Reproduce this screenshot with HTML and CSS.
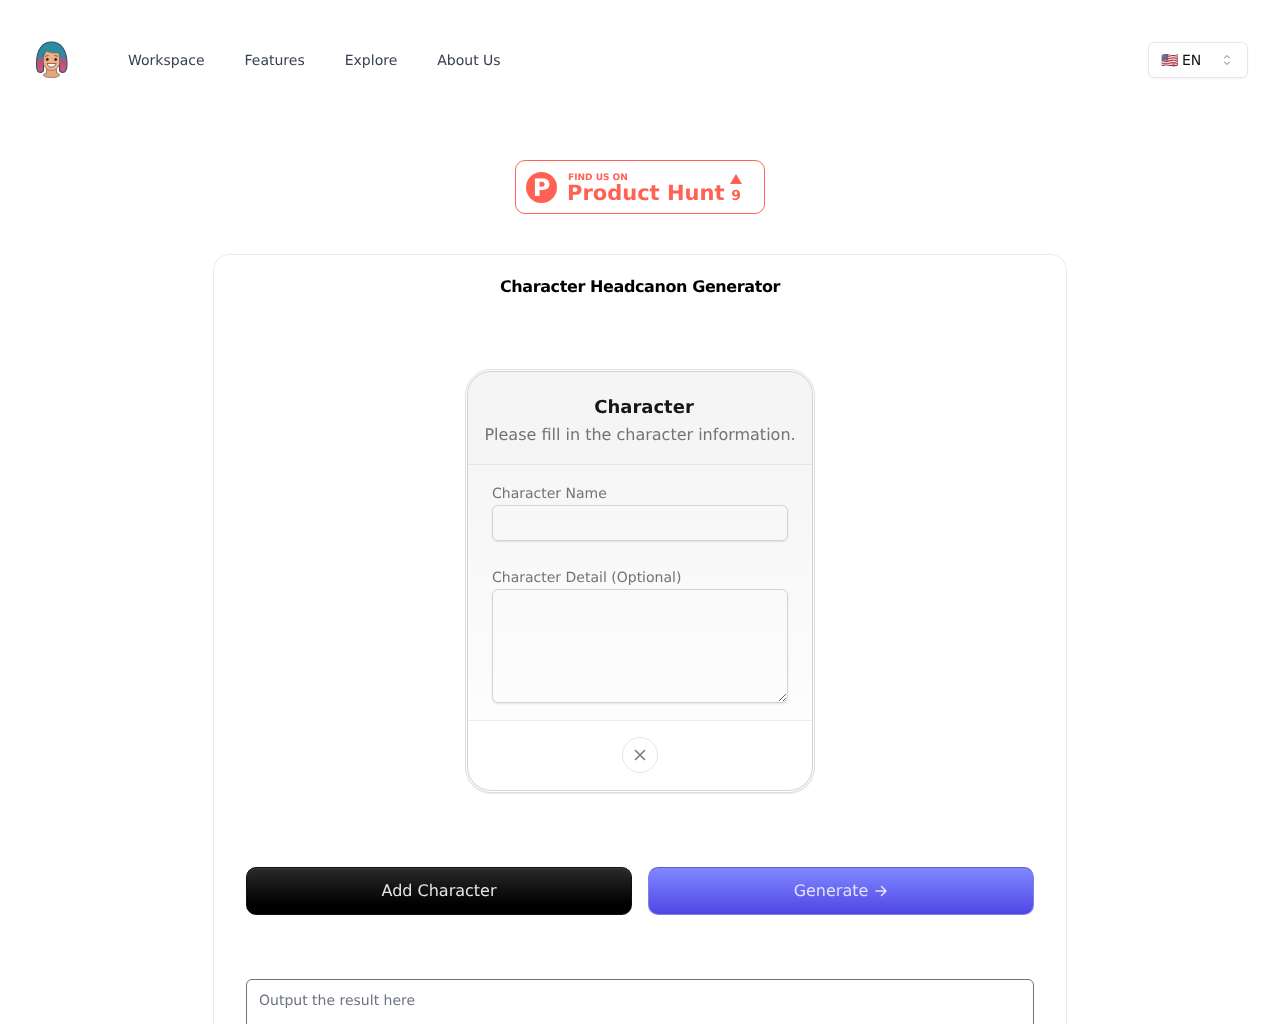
FILE: index.html
```html
<!DOCTYPE html>
<html lang="en">
<head>
<meta charset="utf-8">
<title>Character Headcanon Generator</title>
<link rel="stylesheet" href="styles.css">
</head>
<body>
<header class="topbar">
  <div class="brand">
    <a class="logo" href="#" aria-label="Home">
      <svg width="36" height="40" viewBox="0 0 36 40">
        <defs>
          <linearGradient id="hair" x1="0" y1="0" x2="0" y2="1">
            <stop offset="0" stop-color="#2b8c9f"/>
            <stop offset=".45" stop-color="#2f8ba3"/>
            <stop offset=".62" stop-color="#b3527f"/>
            <stop offset="1" stop-color="#d9557a"/>
          </linearGradient>
        </defs>
        <path d="M12.500 27h10v6c2 .3 3 1 3 2 0 1.500-2.500 2.500-8 2.500S9.500 36.500 9.500 35c0-1 1-1.700 3-2z" fill="#e3a57c" stroke="#8a5f48" stroke-width=".7"/>
        <path d="M2.500 24C2.500 10 8 2 17.500 2S33 10 33 24c0 4-1 7-2.500 8-2 .8-4.500.3-5-1.500V14H9.500v16.500c-.5 1.800-3 2.300-5 1.500C3.200 31 2.500 28 2.500 24z" fill="url(#hair)" stroke="#30506e" stroke-width="1.100"/>
        <path d="M9.500 19c0-4 1.500-6.500 3.500-7.500 3 1.300 8 1.800 12 1.500.5 2 .5 4 .5 6v3.500c0 4.500-3.500 8-8 8s-8-3.500-8-8z" fill="#f0b088" stroke="#8a5f48" stroke-width=".6"/>
        <circle cx="13.300" cy="19.500" r="1.400" fill="#35261f"/>
        <circle cx="21.700" cy="19.500" r="1.400" fill="#35261f"/>
        <path d="M11 16.300l3.500-.8M20.500 15.500l3.500.8" stroke="#6b3f2a" stroke-width=".8"/>
        <path d="M13 23.500h9c-.7 2.400-2.300 3.500-4.500 3.500S13.700 25.900 13 23.500z" fill="#fff" stroke="#6b3f2a" stroke-width=".7"/>
      </svg>
    </a>
    <nav class="nav">
      <a href="#">Workspace</a>
      <a href="#">Features</a>
      <a href="#">Explore</a>
      <a href="#">About Us</a>
    </nav>
  </div>
  <button class="lang" type="button">
    <span class="lang-label">🇺🇸 EN</span>
    <svg width="10" height="14" viewBox="0 0 10 14" fill="none" stroke="#777" stroke-width="1" stroke-linecap="round" stroke-linejoin="round">
      <path d="M2.500 5L5 2.500 7.500 5M2.500 9L5 11.500 7.500 9"/>
    </svg>
  </button>
</header>

<main class="page">
  <a class="ph-badge" href="#">
    <span class="ph-mark">P</span>
    <span class="ph-text">
      <span class="ph-find">FIND US ON</span>
      <span class="ph-name">Product Hunt</span>
    </span>
    <span class="ph-votes">
      <span class="ph-arrow"></span>
      <span class="ph-count">9</span>
    </span>
  </a>

  <section class="panel">
    <h1 class="panel-title">Character Headcanon Generator</h1>

    <div class="char-card">
      <div class="char-head">
        <h2 class="char-title">Character</h2>
        <p class="char-sub">Please fill in the character information.</p>
      </div>
      <div class="char-body">
        <label class="field">
          <span class="field-label">Character Name</span>
          <input class="input" type="text">
        </label>
        <label class="field">
          <span class="field-label">Character Detail (Optional)</span>
          <textarea class="input area"></textarea>
        </label>
      </div>
      <div class="char-foot">
        <button class="close" type="button" aria-label="Remove">
          <svg width="12" height="12" viewBox="0 0 12 12" fill="none" stroke="#777" stroke-width="1.500" stroke-linecap="round">
            <path d="M1.500 1.500l9 9M10.500 1.500l-9 9"/>
          </svg>
        </button>
      </div>
    </div>

    <div class="actions">
      <button class="btn btn-dark" type="button">Add Character</button>
      <button class="btn btn-blue" type="button">Generate
        <svg width="14" height="14" viewBox="0 0 14 14" fill="none" stroke="currentColor" stroke-width="1.600" stroke-linecap="round" stroke-linejoin="round">
          <path d="M2 7h10M7.500 2.500L12 7l-4.500 4.500"/>
        </svg>
      </button>
    </div>

    <textarea class="output" placeholder="Output the result here"></textarea>
  </section>
</main>
</body>
</html>
```

FILE: styles.css
```css
* { box-sizing: border-box; }
html, body { margin: 0; height: 1024px; overflow: hidden; background: #fff; }
body { font-family: "DejaVu Sans", sans-serif; color: #111; text-rendering: geometricPrecision; }

.topbar {
  display: flex;
  align-items: center;
  justify-content: space-between;
  height: 120px;
  padding: 0 32px 0 34px;
  will-change: transform;
}
.brand { display: flex; align-items: center; gap: 58px; }
.logo { display: block; width: 36px; height: 40px; }
.nav { display: flex; gap: 40px; padding-top: 2px; }
.nav a { font-size: 14px; line-height: 20px; color: #374151; text-decoration: none; }
.lang {
  display: flex;
  align-items: center;
  justify-content: space-between;
  width: 100px;
  height: 36px;
  padding: 0 15px 0 12px;
  background: #fff;
  border: 1px solid #e5e7eb;
  border-radius: 6px;
  box-shadow: 0 1px 2px rgba(0,0,0,.05);
  font: 14px/20px "DejaVu Sans", sans-serif;
  color: #111;
  text-rendering: geometricPrecision;
}
.lang-label { white-space: nowrap; word-spacing: -1px; padding-top: 2px; }

.page { display: flex; flex-direction: column; align-items: center; padding-top: 40px; will-change: transform; }

.ph-badge {
  display: flex;
  align-items: center;
  width: 250px;
  height: 54px;
  padding: 0 22px 0 10px;
  border: 1px solid #ff6154;
  border-radius: 10px;
  background: #fff;
  color: #ff6154;
  text-decoration: none;
}
.ph-mark {
  flex: none;
  width: 31px;
  height: 31px;
  border-radius: 50%;
  background: #ff6154;
  color: #fff;
  font-size: 24px;
  font-weight: 700;
  line-height: 32px;
  text-align: center;
}
.ph-text { display: flex; flex-direction: column; margin-left: 10px; padding-top: 3px; }
.ph-find { font-size: 9px; font-weight: 700; line-height: 10px; margin-left: 1px; margin-bottom: -1px; }
.ph-name { font-size: 21px; font-weight: 700; line-height: 23px; white-space: nowrap; }
.ph-votes { display: flex; flex-direction: column; align-items: center; gap: 5px; margin-left: auto; margin-top: 2px; }
.ph-arrow {
  width: 0; height: 0;
  border-left: 6px solid transparent;
  border-right: 6px solid transparent;
  border-bottom: 10px solid #ff6154;
}
.ph-count { font-size: 14px; font-weight: 700; line-height: 14px; }

.panel {
  width: 854px;
  height: 900px;
  margin-top: 40px;
  padding: 22px 32px 0;
  border: 1px solid #e9eaed;
  border-radius: 16px;
  background: #fff;
}
.panel-title { margin: 0; font-size: 16px; letter-spacing: -.4px; line-height: 20px; font-weight: 700; text-align: center; color: #000; }

.char-card {
  width: 350px;
  height: 424px;
  margin: 72px auto 0;
  border: 1px solid #e0e0e0;
  border-radius: 26px;
  padding: 1px;
  box-shadow: 0 1px 0 #e8e8e8;
}
.char-head {
  height: 94px;
  padding-top: 23px;
  border: 1px solid #d4d4d4;
  border-bottom: 1px solid #e5e5e5;
  border-radius: 24px 24px 0 0;
  background: #f5f5f5;
  text-align: center;
}
.char-title { margin: 0 0 0 8px; font-size: 18px; line-height: 26px; font-weight: 700; color: #171717; }
.char-sub { margin: 2px 0 0; font-size: 16px; line-height: 24px; color: #737373; white-space: nowrap; }
.char-body {
  display: flex;
  flex-direction: column;
  gap: 28px;
  height: 256px;
  padding: 20px 24px 0;
  border-left: 1px solid #d4d4d4;
  border-right: 1px solid #d4d4d4;
  border-bottom: 1px solid #ebebeb;
  background: linear-gradient(#f6f6f6, #fdfdfd);
}
.field { display: flex; flex-direction: column; }
.field-label { font-size: 14px; line-height: 18px; color: #737373; margin-bottom: 2px; }
.input {
  display: block;
  width: 100%;
  height: 36px;
  margin: 0;
  border: 1px solid #d4d4d4;
  border-radius: 6px;
  background: transparent;
  box-shadow: 0 1px 2px rgba(0,0,0,.1);
  font: 14px/20px "DejaVu Sans", sans-serif;
}
.area { height: 114px; resize: vertical; }
.char-foot {
  display: flex;
  justify-content: center;
  align-items: center;
  height: 70px;
  padding-bottom: 2px;
  border: 1px solid #d4d4d4;
  border-top: 0;
  border-radius: 0 0 24px 24px;
  background: #fff;
}
.close {
  display: flex;
  align-items: center;
  justify-content: center;
  width: 36px;
  height: 36px;
  padding: 0;
  border: 1px solid #e5e5e5;
  border-radius: 50%;
  background: #fff;
}

.actions { display: grid; grid-template-columns: 1fr 1fr; gap: 16px; margin-top: 74px; }
.btn {
  display: flex;
  align-items: center;
  justify-content: center;
  gap: 6px;
  height: 48px;
  border-radius: 10px;
  font: 16px/24px "DejaVu Sans", sans-serif;
  text-rendering: geometricPrecision;
}
.btn-dark {
  border: 1px solid #111;
  background: linear-gradient(#2a2a2a, #000 80%);
  color: #e5e5e5;
  box-shadow: inset 0 1px 0 rgba(255,255,255,.08);
}
.btn-blue {
  border: 1px solid #7b80ea;
  border-top-color: #5a5fc0;
  background: linear-gradient(#8088ff, #4f46e5);
  color: #e0e2ff;
}

.output {
  display: block;
  width: 100%;
  height: 200px;
  margin-top: 64px;
  padding: 11px 12px;
  border: 1px solid #6b7280;
  border-radius: 6px;
  background: #fff;
  font: 14px/20px "DejaVu Sans", sans-serif;
  text-rendering: geometricPrecision;
  resize: none;
}
.output::placeholder { color: #6b7280; opacity: 1; }
```
